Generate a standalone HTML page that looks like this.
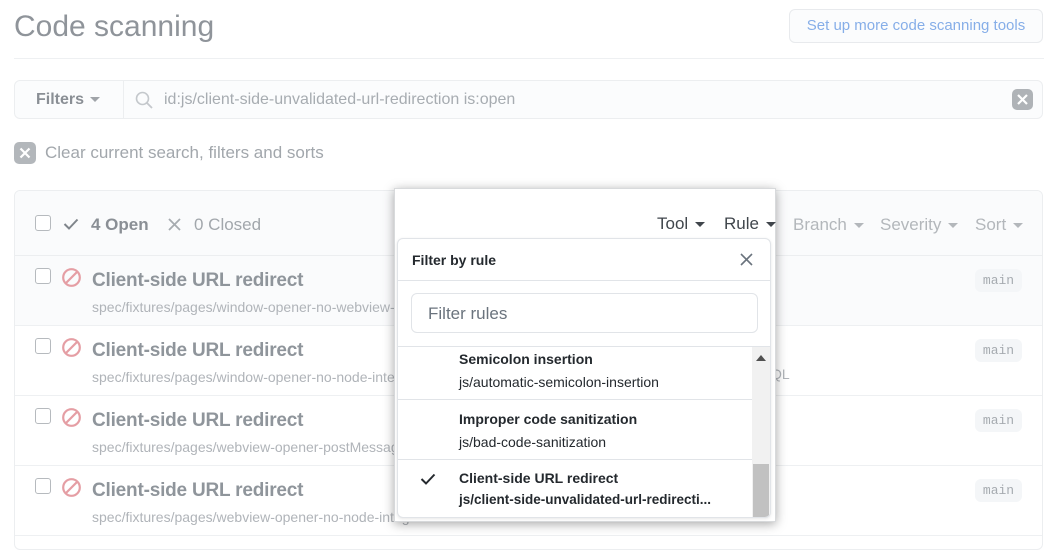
<!DOCTYPE html>
<html><head><meta charset="utf-8"><style>
*{box-sizing:border-box;margin:0;padding:0}
body{width:1044px;height:530px;overflow:hidden;background:#fff;font-family:"Liberation Sans",sans-serif;position:relative;color:#9a9fa5}
.a{position:absolute;white-space:nowrap}
.title{left:14px;top:10px;font-size:30px;color:#8f949a;font-weight:300}
.btn{left:789px;top:9px;width:254px;height:34px;border:1px solid #e8eaed;border-radius:6px;background:#fbfcfd;color:#86aee8;font-size:15px;text-align:center;line-height:32px}
.hr{left:14px;top:58px;width:1030px;height:1px;background:#eef0f2}
.fbar{left:14px;top:80px;width:1029px;height:39px;border:1px solid #eceef0;border-radius:6px;background:#fbfcfd}
.fbtn{left:0;top:0;width:109px;height:37px;border-right:1px solid #eceef0;font-size:16px;color:#8a8f95;padding:10px 0 0 21px;font-weight:bold}
.box{left:14px;top:190px;width:1029px;height:360px;border:1px solid #eceef0;border-radius:6px;overflow:hidden}
.hdr{left:0;top:0;width:100%;height:65px;background:#fafbfc;border-bottom:1px solid #eceef0}
.cb{width:16px;height:16px;border:1px solid #b6babe;border-radius:3px;background:#fff}
.row{left:0;width:100%;height:70px;border-bottom:1px solid #eef0f2}
.rt{left:77px;top:14px;font-size:19px;font-weight:bold;color:#8f959b;letter-spacing:-0.2px}
.rp{left:77px;top:43px;font-size:14px;color:#b0b4b9;white-space:nowrap}
.lbl{left:960px;top:13px;width:47px;height:23px;background:#f4f6f8;border-radius:6px;font-family:"Liberation Mono",monospace;font-size:13px;color:#a6abb0;text-align:center;line-height:23px}
.ht{font-size:17px;color:#a2a7ac}
.cr{display:inline-block;width:0;height:0;border-left:5px solid transparent;border-right:5px solid transparent;border-top:5px solid currentColor;vertical-align:middle;margin-left:2px}
.pop{left:394px;top:188px;width:382px;height:334px;background:#fff;box-shadow:0 2px 10px rgba(0,0,0,.35);border:1px solid #d8dadc}
.menu{left:397px;top:238px;width:374px;height:280px;border:1px solid #e1e4e8;border-radius:6px;background:#fff;overflow:hidden;box-shadow:0 1px 3px rgba(0,0,0,.1)}
.it{left:0;width:354px;border-bottom:1px solid #e1e4e8;color:#24292e}
.it b{position:absolute;left:61px;font-size:14px;font-weight:bold}
.it span{position:absolute;left:61px;font-size:14px}
</style></head><body>
<div class="a title">Code scanning</div>
<div class="a btn">Set up more code scanning tools</div>
<div class="a hr"></div>
<div class="a fbar">
 <div class="a fbtn">Filters <span class="cr" style="color:#a0a4a9"></span></div>
 <svg class="a" style="left:120px;top:10px" width="18" height="18" viewBox="0 0 18 18"><circle cx="7.5" cy="7.5" r="6" fill="none" stroke="#c4c8cc" stroke-width="1.6"/><path d="M12 12l5 5" stroke="#c4c8cc" stroke-width="1.8"/></svg>
 <div class="a" style="left:149px;top:10px;font-size:16px;color:#a7acb1">id:js/client-side-unvalidated-url-redirection is:open</div>
 <div class="a" style="left:997px;top:8px;width:21px;height:21px;border-radius:5px;background:#afb3b7"><svg width="21" height="21"><path d="M6 6l9 9M15 6l-9 9" stroke="#fff" stroke-width="2.2"/></svg></div>
</div>
<div class="a" style="left:14px;top:142px;width:22px;height:22px;border-radius:5px;background:#b3b7bb"><svg width="22" height="22"><path d="M6.5 6.5l9 9M15.5 6.5l-9 9" stroke="#fff" stroke-width="2.2"/></svg></div>
<div class="a" style="left:45px;top:143px;font-size:17px;color:#a2a7ac">Clear current search, filters and sorts</div>

<div class="a box">
 <div class="a hdr">
  <div class="a cb" style="left:20px;top:24px"></div>
  <svg class="a" style="left:48px;top:26px" width="16" height="14"><path d="M1.5 7l4.5 4.5 8.5-9" fill="none" stroke="#7f858b" stroke-width="2"/></svg>
  <div class="a ht" style="left:76px;top:24px;font-weight:bold;color:#8a8f95">4 Open</div>
  <svg class="a" style="left:153px;top:27px" width="13" height="13"><path d="M1 1l11 11M12 1L1 12" stroke="#a6abb0" stroke-width="1.8"/></svg>
  <div class="a ht" style="left:179px;top:24px">0 Closed</div>
  <div class="a ht" style="left:778px;top:24px;color:#b3b7bb">Branch <span class="cr"></span></div>
  <div class="a ht" style="left:865px;top:24px;color:#b3b7bb">Severity <span class="cr"></span></div>
  <div class="a ht" style="left:960px;top:24px;color:#b3b7bb">Sort <span class="cr"></span></div>
 </div>
 <div class="a row" style="top:65px;background:#fafbfc"><div class="a cb" style="left:20px;top:12px"></div><svg class="a" style="left:46px;top:11px" width="21" height="21"><circle cx="10.5" cy="10.5" r="8.3" fill="none" stroke="#e59ea4" stroke-width="2.2"/><path d="M5 16L16 5" stroke="#e59ea4" stroke-width="2.2"/></svg><div class="a rt">Client-side URL redirect</div><div class="a rp">spec/fixtures/pages/window-opener-no-webview-tag.html</div><div class="a lbl">main</div></div>
 <div class="a row" style="top:135px"><div class="a cb" style="left:20px;top:12px"></div><svg class="a" style="left:46px;top:11px" width="21" height="21"><circle cx="10.5" cy="10.5" r="8.3" fill="none" stroke="#e59ea4" stroke-width="2.2"/><path d="M5 16L16 5" stroke="#e59ea4" stroke-width="2.2"/></svg><div class="a rt">Client-side URL redirect</div><div class="a rp">spec/fixtures/pages/window-opener-no-node-integration.html</div><div class="a lbl">main</div><div class="a" style="left:756px;top:40px;font-size:14px;color:#b0b4b9">QL</div></div>
 <div class="a row" style="top:205px"><div class="a cb" style="left:20px;top:12px"></div><svg class="a" style="left:46px;top:11px" width="21" height="21"><circle cx="10.5" cy="10.5" r="8.3" fill="none" stroke="#e59ea4" stroke-width="2.2"/><path d="M5 16L16 5" stroke="#e59ea4" stroke-width="2.2"/></svg><div class="a rt">Client-side URL redirect</div><div class="a rp">spec/fixtures/pages/webview-opener-postMessage.html</div><div class="a lbl">main</div></div>
 <div class="a row" style="top:275px"><div class="a cb" style="left:20px;top:12px"></div><svg class="a" style="left:46px;top:11px" width="21" height="21"><circle cx="10.5" cy="10.5" r="8.3" fill="none" stroke="#e59ea4" stroke-width="2.2"/><path d="M5 16L16 5" stroke="#e59ea4" stroke-width="2.2"/></svg><div class="a rt">Client-side URL redirect</div><div class="a rp">spec/fixtures/pages/webview-opener-no-node-integration.html</div><div class="a lbl">main</div></div>
</div>

<div class="a pop">
 <div class="a" style="left:262px;top:25px;font-size:17px;color:#40464c">Tool <span class="cr"></span></div>
 <div class="a" style="left:329px;top:25px;font-size:17px;color:#40464c">Rule <span class="cr"></span></div>
</div>
<div class="a menu">
 <div class="a" style="left:14px;top:13px;font-size:14px;font-weight:bold;color:#24292e">Filter by rule</div>
 <svg class="a" style="left:342px;top:14px" width="13" height="13"><path d="M1 1l11 11M12 1L1 12" stroke="#6a737d" stroke-width="1.6"/></svg>
 <div class="a" style="left:0;top:41px;width:100%;height:1px;background:#e1e4e8"></div>
 <div class="a" style="left:13px;top:54px;width:347px;height:40px;border:1px solid #e1e4e8;border-radius:6px;font-size:17px;color:#6a737d;padding:10px 0 0 16px">Filter rules</div>
 <div class="a" style="left:0;top:107px;width:100%;height:1px;background:#e1e4e8"></div>
 <div class="a it" style="top:108px;height:53px"><b style="top:4px">Semicolon insertion</b><span style="top:27px">js/automatic-semicolon-insertion</span></div>
 <div class="a it" style="top:161px;height:60px"><b style="top:11px">Improper code sanitization</b><span style="top:34px">js/bad-code-sanitization</span></div>
 <div class="a it" style="top:221px;height:60px;border:none"><svg class="a" style="left:22px;top:12px" width="16" height="14"><path d="M1.5 7l4.5 4.5 8.5-9" fill="none" stroke="#24292e" stroke-width="2"/></svg><b style="top:10px">Client-side URL redirect</b><span style="top:32px;font-weight:bold;font-size:13.5px">js/client-side-unvalidated-url-redirecti...</span></div>
 <div class="a" style="left:354px;top:108px;width:18px;height:172px;background:#f1f1f1"></div>
 <div class="a" style="left:358px;top:116px;width:0;height:0;border-left:5px solid transparent;border-right:5px solid transparent;border-bottom:6px solid #505050"></div>
 <div class="a" style="left:355px;top:225px;width:16px;height:55px;background:#c1c1c1"></div>
</div>
</body></html>
